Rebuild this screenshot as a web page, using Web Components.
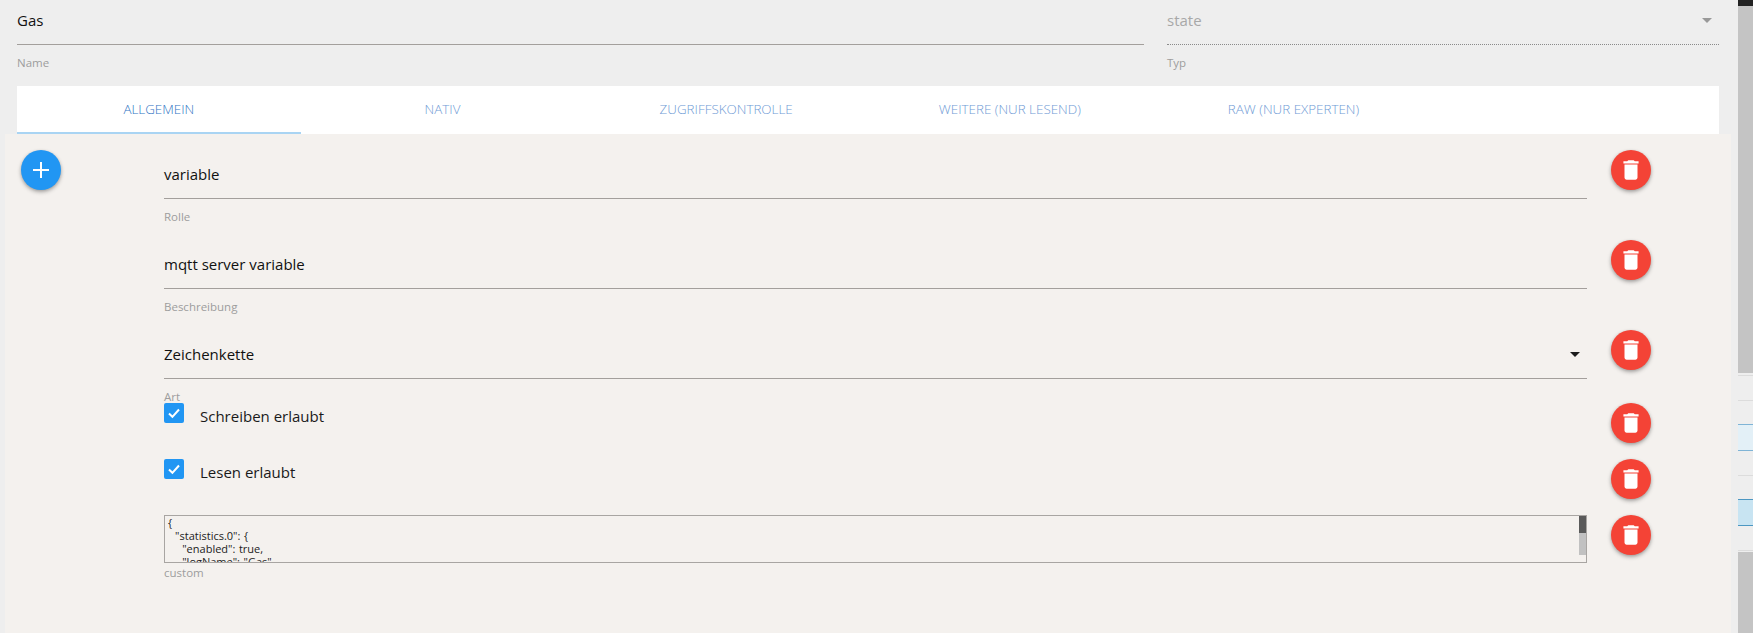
<!DOCTYPE html>
<html lang="de">
<head>
<meta charset="utf-8">
<title>Objekt bearbeiten</title>
<style>
  html, body { margin: 0; padding: 0; height: 100%; overflow: hidden; background: #eeeeee; }
  body { font-family: "Open Sans", "Noto Sans", sans-serif; }
</style>
</head>
<body>
<object-editor></object-editor>

<script>
const ICON_TRASH = '<svg viewBox="0 0 24 24" width="26" height="26"><path fill="#fff" d="M6 19c0 1.1.9 2 2 2h8c1.1 0 2-.9 2-2V7H6v12zM19 4h-3.5l-1-1h-5l-1 1H5v2h14V4z"/></svg>';
const ICON_PLUS = '<svg viewBox="0 0 16 16" width="16" height="16"><path fill="#fff" d="M7 0h2v7h7v2H9v7H7V9H0V7h7z"/></svg>';

class RoundButton extends HTMLElement {
    constructor() {
        super();
        this.shadowDOM = this.attachShadow({mode: 'open'});
    }
    connectedCallback() {
        const add = this.getAttribute('kind') === 'add';
        this.shadowDOM.innerHTML = `
        <style>
        :host {
            display: flex;
            align-items: center;
            justify-content: center;
            width: 40px;
            height: 40px;
            border-radius: 50%;
            background: ${add ? '#2196f3' : '#f44336'};
            box-shadow: 0 2px 4px rgba(0, 0, 0, 0.28), 0 1px 3px rgba(0, 0, 0, 0.12);
        }
        svg { display: block; }
        </style>
        ${add ? ICON_PLUS : ICON_TRASH}`;
    }
}

class FormField extends HTMLElement {
    constructor() {
        super();
        this.shadowDOM = this.attachShadow({mode: 'open'});
    }
    connectedCallback() {
        const muted = this.hasAttribute('disabled');
        const select = this.hasAttribute('select');
        this.shadowDOM.innerHTML = `
        <style>
        :host {
            display: block;
        }
        .input {
            display: flex;
            align-items: center;
            justify-content: space-between;
            padding: var(--top, 4px) 0 4px;
            line-height: 40px;
            font-size: 15px;
            color: ${muted ? '#a8a8a8' : '#111'};
            border-bottom: 1px ${muted ? 'dotted #8a8a8a' : 'solid #a39f9c'};
        }
        .arrow {
            width: 0;
            height: 0;
            margin-right: 7px;
            border: 5px solid transparent;
            border-bottom: 0;
            border-top-color: ${muted ? '#999' : '#1c1c1c'};
        }
        .label {
            margin-top: 8px;
            line-height: 20px;
            font-size: 11.5px;
            color: #9d9d9d;
        }
        </style>
        <div class="input"><span>${this.getAttribute('value')}</span>${select ? '<i class="arrow"></i>' : ''}</div>
        <div class="label">${this.getAttribute('label')}</div>`;
    }
}

class EditorTabs extends HTMLElement {
    constructor() {
        super();
        this.shadowDOM = this.attachShadow({mode: 'open'});
        this.shadowDOM.innerHTML = `
        <style>
        :host {
            display: grid;
            grid-template-columns: repeat(6, 1fr);
            height: 48px;
            background: #fff;
        }
        </style>
        <slot></slot>`;
    }
}

class EditorTab extends HTMLElement {
    constructor() {
        super();
        this.shadowDOM = this.attachShadow({mode: 'open'});
        this.shadowDOM.innerHTML = `
        <style>
        :host {
            display: flex;
            align-items: center;
            justify-content: center;
            box-sizing: border-box;
            border-bottom: 2px solid transparent;
            font-size: 13.4px;
            font-weight: 300;
            color: #6f9bd5;
        }
        :host([active]) {
            color: #3275c4;
            border-bottom-color: #a9d4f3;
        }
        </style>
        <slot></slot>`;
    }
}

class PanelRow extends HTMLElement {
    constructor() {
        super();
        this.shadowDOM = this.attachShadow({mode: 'open'});
        this.shadowDOM.innerHTML = `
        <style>
        :host {
            display: grid;
            grid-template-columns: 1423px 40px;
            column-gap: 24px;
            align-items: start;
            height: var(--row, 90px);
        }
        </style>
        <div><slot></slot></div>
        <round-button></round-button>`;
    }
}

class CheckField extends HTMLElement {
    constructor() {
        super();
        this.shadowDOM = this.attachShadow({mode: 'open'});
        this.shadowDOM.innerHTML = `
        <style>
        :host {
            display: flex;
            align-items: flex-start;
            gap: 16px;
        }
        .box {
            display: flex;
            align-items: center;
            justify-content: center;
            width: 20px;
            height: 20px;
            border-radius: 2px;
            background: #2196f3;
        }
        .text {
            padding-top: 3px;
            line-height: 20px;
            font-size: 15px;
            color: #1a1a1a;
        }
        </style>
        <span class="box"><svg viewBox="0 0 20 20" width="20" height="20"><path fill="none" stroke="#fff" stroke-width="2" d="M5 10.5l3.4 3.3L15 6.5"/></svg></span>
        <span class="text"><slot></slot></span>`;
    }
}

class CodeField extends HTMLElement {
    constructor() {
        super();
        this.shadowDOM = this.attachShadow({mode: 'open'});
    }
    connectedCallback() {
        this.shadowDOM.innerHTML = `
        <style>
        :host { display: block; }
        .area {
            display: flex;
            box-sizing: border-box;
            height: 48px;
            border: 1px solid #a8a5a2;
        }
        pre {
            flex: 1;
            margin: 0;
            padding: 0 3px;
            overflow: hidden;
            font: 11px/13px "Open Sans", "Noto Sans", sans-serif;
            word-spacing: 0.7px;
            color: #222;
        }
        .bar {
            display: flex;
            flex-direction: column;
            width: 7px;
            background: #c1c1c1;
        }
        .thumb { height: 17px; background: #5a5a5a; }
        .grip { margin-top: auto; height: 7px; background: #f4f1ee; }
        .label {
            margin-top: 5px;
            line-height: 10px;
            font-size: 11.5px;
            color: #9d9d9d;
        }
        </style>
        <div class="area">
            <pre>{
  "statistics.0": {
    "enabled": true,
    "logName": "Gas",</pre>
            <div class="bar"><div class="thumb"></div><div class="grip"></div></div>
        </div>
        <div class="label">${this.getAttribute('label')}</div>`;
    }
}

class PageScrollbar extends HTMLElement {
    constructor() {
        super();
        this.shadowDOM = this.attachShadow({mode: 'open'});
        this.shadowDOM.innerHTML = `
        <style>
        :host {
            display: flex;
            flex-direction: column;
            background: #eeeeee;
        }
        .cap { height: 6px; background: #222; }
        .thumb { height: 367px; margin-bottom: 2px; background: #c4c4c4; }
        .line { height: 24px; box-sizing: border-box; border-top: 1px solid #dcdcdc; }
        .blank { height: 24px; }
        .hit { height: 27px; box-sizing: border-box; background: #e3f0f7; border-top: 1px solid #7fb4d6; border-bottom: 1px solid #7fb4d6; }
        .hit.on { background: #c8e4f2; border-color: #4c97c2; }
        .end { flex: 1; background: #c4c4c4; }
        </style>
        <div class="cap"></div>
        <div class="thumb"></div>
        <div class="line" style="height:25px"></div>
        <div class="line"></div>
        <div class="hit"></div>
        <div class="blank"></div>
        <div class="line"></div>
        <div class="hit on"></div>
        <div class="blank"></div>
        <div class="line" style="height:2px"></div>
        <div class="end"></div>`;
    }
}

class ObjectEditor extends HTMLElement {
    constructor() {
        super();
        this.shadowDOM = this.attachShadow({mode: 'open'});
        this.shadowDOM.innerHTML = `
        <style>
        :host {
            display: grid;
            grid-template-columns: 1738px 15px;
            height: 633px;
            overflow: hidden;
        }
        .main { display: flex; flex-direction: column; min-width: 0; }
        .head {
            display: grid;
            grid-template-columns: 1127px 552px;
            column-gap: 23px;
            height: 86px;
            padding-left: 17px;
            --top: 0px;
        }
        editor-tabs { margin: 0 19px 0 17px; }
        .panel {
            flex: 1;
            display: grid;
            grid-template-columns: 159px 1fr;
            margin: 0 7px 0 5px;
            padding-top: 16px;
            background: #f4f1ee;
        }
        .side { padding-left: 16px; }
        </style>
        <div class="main">
            <div class="head">
                <form-field value="Gas" label="Name"></form-field>
                <form-field value="state" label="Typ" select disabled></form-field>
            </div>
            <editor-tabs>
                <editor-tab active>ALLGEMEIN</editor-tab>
                <editor-tab>NATIV</editor-tab>
                <editor-tab>ZUGRIFFSKONTROLLE</editor-tab>
                <editor-tab>WEITERE (NUR LESEND)</editor-tab>
                <editor-tab>RAW (NUR EXPERTEN)</editor-tab>
            </editor-tabs>
            <div class="panel">
                <div class="side"><round-button kind="add"></round-button></div>
                <div class="rows">
                    <panel-row><form-field value="variable" label="Rolle"></form-field></panel-row>
                    <panel-row><form-field value="mqtt server variable" label="Beschreibung"></form-field></panel-row>
                    <panel-row style="--row:73px"><form-field value="Zeichenkette" label="Art" select></form-field></panel-row>
                    <panel-row style="--row:56px"><check-field>Schreiben erlaubt</check-field></panel-row>
                    <panel-row style="--row:56px"><check-field>Lesen erlaubt</check-field></panel-row>
                    <panel-row style="--row:68px"><code-field label="custom"></code-field></panel-row>
                </div>
            </div>
        </div>
        <page-scrollbar></page-scrollbar>`;
    }
}

customElements.define('round-button', RoundButton);
customElements.define('form-field', FormField);
customElements.define('editor-tabs', EditorTabs);
customElements.define('editor-tab', EditorTab);
customElements.define('panel-row', PanelRow);
customElements.define('check-field', CheckField);
customElements.define('code-field', CodeField);
customElements.define('page-scrollbar', PageScrollbar);
customElements.define('object-editor', ObjectEditor);
</script>
</body>
</html>
